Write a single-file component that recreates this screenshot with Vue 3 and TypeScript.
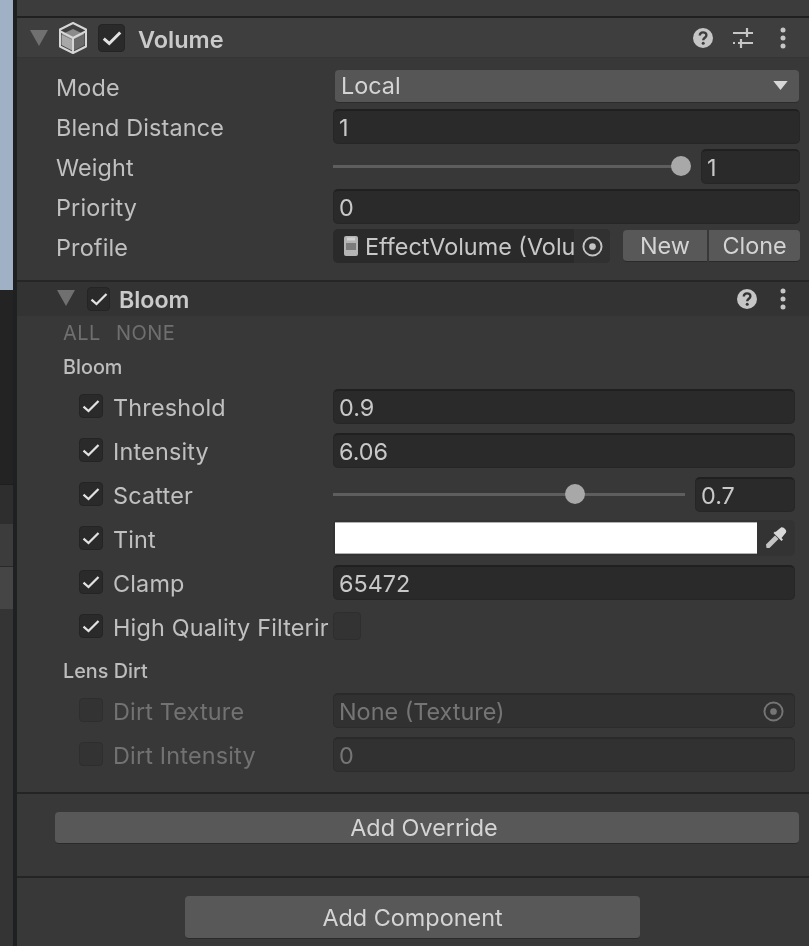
<script setup lang="ts">
interface BloomRow {
  label: string
  kind: 'field' | 'slider' | 'color' | 'toggle'
  value?: string
  pct?: number
}

const volumeLabels = { mode: 'Mode', blend: 'Blend Distance', weight: 'Weight', priority: 'Priority', profile: 'Profile' }

const bloomRows: BloomRow[] = [
  { label: 'Threshold', kind: 'field', value: '0.9' },
  { label: 'Intensity', kind: 'field', value: '6.06' },
  { label: 'Scatter', kind: 'slider', value: '0.7', pct: 68.75 },
  { label: 'Tint', kind: 'color' },
  { label: 'Clamp', kind: 'field', value: '65472' },
  { label: 'High Quality Filterir', kind: 'toggle' }
]
</script>

<template>
  <div class="app">
    <aside class="strip">
      <div class="s-blue"></div>
      <div class="s-dark"></div>
      <div class="s-mid"></div>
      <div class="s-light"></div>
      <div class="s-sel"></div>
      <div class="s-rest"></div>
    </aside>
    <main class="panel">
      <div class="top"></div>

      <header class="comp-head">
        <svg class="tri tri-main" viewBox="0 0 18 16"><path d="M0 0h18L9 16z" /></svg>
        <svg class="cube" viewBox="0 0 32 34">
          <path d="M16 8 4.500 13.500 16 19l11.500-5.500z" fill="#8a8a8a" />
          <path d="M4.500 13.500V24L16 30V19z" fill="#a8a8a8" />
          <path d="M27.500 13.500V24L16 30V19z" fill="#6a6a6a" />
          <path d="M16 2 3 8.500v17L16 32l13-6.500v-17z" fill="none" stroke="#d6d6d6" stroke-width="2" stroke-linejoin="round" />
          <path d="M3.500 10.500 16 17l12.500-6.500M16 17v15" fill="none" stroke="#d6d6d6" stroke-width="2" />
        </svg>
        <span class="box box-head">
          <svg viewBox="0 0 16 16"><path d="M2 8.500 6 12 14 4" /></svg>
        </span>
        <span class="title">Volume</span>
        <span class="head-spacer"></span>
        <svg class="ico" viewBox="0 0 22 22">
          <circle cx="11" cy="11" r="10" fill="#c6c6c6" />
          <path d="M7.800 8.600c0-4.200 6.600-4.200 6.600-.4 0 2.500-3.200 2.500-3.200 5" fill="none" stroke="#3e3e3e" stroke-width="2.400" />
          <circle cx="11.200" cy="16.300" r="1.500" fill="#3e3e3e" />
        </svg>
        <svg class="ico ico-sliders" viewBox="0 0 22 22">
          <path d="M1 6h20M6 16h15M1 16h2M15 1v9M9 12v9" fill="none" stroke="#c6c6c6" stroke-width="2.200" />
        </svg>
        <svg class="ico ico-kebab" viewBox="0 0 6 22">
          <circle cx="3" cy="3" r="2.500" /><circle cx="3" cy="11" r="2.500" /><circle cx="3" cy="19" r="2.500" />
        </svg>
      </header>

      <section class="vol-body">
        <div class="vrow">
          <label>{{ volumeLabels.mode }}</label>
          <div class="dropdown">
            <span>Local</span>
            <svg viewBox="0 0 16 10"><path d="M0 0h16L8 10z" /></svg>
          </div>
        </div>
        <div class="vrow">
          <label>{{ volumeLabels.blend }}</label>
          <div class="field">1</div>
        </div>
        <div class="vrow">
          <label>{{ volumeLabels.weight }}</label>
          <div class="slider">
            <div class="track"><i class="thumb" :style="{ left: '97.4%' }"></i></div>
            <div class="field num num-vol">1</div>
          </div>
        </div>
        <div class="vrow">
          <label>{{ volumeLabels.priority }}</label>
          <div class="field">0</div>
        </div>
        <div class="vrow">
          <label>{{ volumeLabels.profile }}</label>
          <div class="profile">
            <div class="objfield">
              <svg class="doc" viewBox="0 0 16 22">
                <rect x="1" y="1" width="14" height="20" rx="2" fill="#b4b4b4" />
                <rect x="3" y="8" width="10" height="7" fill="#7c7c7c" />
                <rect x="4" y="2.500" width="8" height="3" fill="#d0d0d0" />
              </svg>
              <span class="objtext">EffectVolume (Volu</span>
              <span class="picker">
                <svg viewBox="0 0 22 22"><circle cx="11" cy="11" r="9.500" fill="none" stroke="#c4c4c4" stroke-width="2" /><circle cx="11" cy="11" r="3.500" fill="#c4c4c4" /></svg>
              </span>
            </div>
            <div class="btns">
              <button class="btn new">New</button>
              <button class="btn clone">Clone</button>
            </div>
          </div>
        </div>
      </section>

      <header class="bloom-head">
        <svg class="tri tri-bloom" viewBox="0 0 18 16"><path d="M0 0h18L9 16z" /></svg>
        <span class="box box-bloom">
          <svg viewBox="0 0 16 16"><path d="M2 8.500 6 12 14 4" /></svg>
        </span>
        <span class="title title-bloom">Bloom</span>
        <span class="head-spacer"></span>
        <svg class="ico" viewBox="0 0 22 22">
          <circle cx="11" cy="11" r="10" fill="#c6c6c6" />
          <path d="M7.800 8.600c0-4.200 6.600-4.200 6.600-.4 0 2.500-3.200 2.500-3.200 5" fill="none" stroke="#333" stroke-width="2.400" />
          <circle cx="11.200" cy="16.300" r="1.500" fill="#333" />
        </svg>
        <svg class="ico ico-kebab kebab-bloom" viewBox="0 0 6 22">
          <circle cx="3" cy="3" r="2.500" /><circle cx="3" cy="11" r="2.500" /><circle cx="3" cy="19" r="2.500" />
        </svg>
      </header>

      <section class="bloom-body">
        <div class="allnone"><span>ALL</span><span>NONE</span></div>
        <h4>Bloom</h4>
        <div class="rows">
          <div v-for="row in bloomRows" :key="row.label" class="brow">
            <span class="box box-row">
              <svg viewBox="0 0 16 16"><path d="M2 8.500 6 12 14 4" /></svg>
            </span>
            <label class="blabel">{{ row.label }}</label>
            <div v-if="row.kind === 'field'" class="field">{{ row.value }}</div>
            <div v-else-if="row.kind === 'slider'" class="slider slider-bloom">
              <div class="track"><i class="thumb" :style="{ left: row.pct + '%' }"></i></div>
              <div class="field num">{{ row.value }}</div>
            </div>
            <div v-else-if="row.kind === 'color'" class="color">
              <div class="swatch"></div>
              <span class="dropper">
                <svg viewBox="0 0 24 24">
                  <path d="M2.500 22 2 18.500 11 9.500l3.500 3.500-9 9z" fill="#c4c4c4" />
                  <path d="M11.500 6 17 1.500c2-1.500 6.500 3 5 5L17.500 12l1.500 1.500-1.500 1.500-8-8 1.500-1.500z" fill="#d8d8d8" />
                </svg>
              </span>
            </div>
            <span v-else class="box box-toggle"></span>
          </div>
        </div>
        <h4 class="h-dirt">Lens Dirt</h4>
        <div class="rows">
          <div class="brow dim">
            <span class="box box-row"></span>
            <label class="blabel">Dirt Texture</label>
            <div class="field obj-dim">
              <span>None (Texture)</span>
              <svg viewBox="0 0 22 22"><circle cx="11" cy="11" r="9.500" fill="none" stroke="#757575" stroke-width="2" /><circle cx="11" cy="11" r="3.500" fill="#757575" /></svg>
            </div>
          </div>
          <div class="brow dim">
            <span class="box box-row"></span>
            <label class="blabel">Dirt Intensity</label>
            <div class="field">0</div>
          </div>
        </div>
      </section>

      <section class="override">
        <button class="btn wide">Add Override</button>
      </section>

      <section class="add">
        <button class="btn addc">Add Component</button>
      </section>
    </main>
  </div>
</template>

<style>
html, body { margin: 0; background: #383838; overflow: hidden; }
</style>

<style scoped>
.app {
  display: flex;
  width: 813px;
  height: 946px;
  margin-left: -4px;
  overflow: hidden;
  background: #383838;
  color: #c0c0c0;
  font-family: Inter, "Noto Sans", sans-serif;
  font-size: 23.400px;
  filter: blur(0.65px);
}
.strip {
  flex: 0 0 17px;
  display: flex;
  flex-direction: column;
  border-right: 4px solid #1e2022;
}
.s-blue { height: 290px; background: #a0b1c5; }
.s-dark { height: 194px; background: #232323; }
.s-mid { height: 39px; background: #2e2e2e; border-top: 1px solid #1e1e1e; }
.s-light { height: 42px; background: #3c3c3c; border-bottom: 1px solid #2a2a2a; }
.s-sel { height: 42px; background: #454545; }
.s-rest { flex: 1; background: #343434; }

.panel { flex: 1; min-width: 0; display: flex; flex-direction: column; }
.top { height: 16px; background: #3c3c3c; border-bottom: 2px solid #202020; }

.comp-head, .bloom-head { display: flex; align-items: center; }
.comp-head { height: 40px; background: #3e3e3e; padding: 0 23px 0 13px; border-bottom: 1px solid #353535; box-sizing: border-box; }
.bloom-head { height: 34px; background: #333; padding: 0 23px 0 40px; border-top: 2px solid #262626; box-sizing: content-box; }

.tri { fill: #707070; flex: none; }
.tri-main { width: 18px; height: 16px; }
.tri-bloom { width: 18px; height: 16px; margin-top: -2px; }
.cube { width: 32px; height: 34px; margin-left: 9px; flex: none; }

.box { display: flex; align-items: center; justify-content: center; flex: none; box-sizing: border-box; background: #2a2a2a; border: 1px solid #242424; border-radius: 4px; }
.box svg { fill: none; stroke: #e2e2e2; stroke-width: 1.800; }
.box-head { width: 27px; height: 28px; margin-left: 9px; }
.box-head svg { width: 22px; height: 22px; stroke-width: 2.200; }
.box-bloom { width: 23px; height: 24px; margin-left: 12px; }
.box-bloom svg { width: 20px; height: 20px; }
.box-row { width: 24px; height: 24px; }
.box-row svg { width: 20px; height: 20px; }
.box-toggle { width: 28px; height: 28px; background: #333; border-color: #2e2e2e; }

.title { margin-left: 13px; padding-top: 3px; font-weight: 600; color: #cacaca; font-size: 23.500px; }
.title-bloom { margin-left: 9px; padding-top: 1px; font-size: 23.200px; }
.head-spacer { flex: 1; }

.ico { width: 22px; height: 22px; flex: none; }
.ico-sliders { margin-left: 18px; }
.ico-kebab { width: 6px; fill: #c6c6c6; margin-left: 26px; }
.kebab-bloom { margin-left: 22px; }

.vol-body { padding: 10px 9px 16px 39px; display: flex; flex-direction: column; gap: 4px; }
.vrow { display: grid; grid-template-columns: 277px 1fr; height: 36px; align-items: center; }
.vrow label { padding-top: 2px; letter-spacing: 0.150px; }

.field {
  display: flex;
  align-items: center;
  height: 35px;
  min-width: 0;
  box-sizing: border-box;
  padding: 2px 5px 0;
  flex: 1;
  background: #2a2a2a;
  border: 1px solid #262626;
  border-top: 2px solid #202020;
  border-radius: 5px;
  color: #c8c8c8;
}

.dropdown {
  display: flex;
  align-items: center;
  justify-content: space-between;
  height: 32px;
  margin: 0 1px 0 2px;
  padding: 0 10px 0 6px;
  background: #565656;
  border-bottom: 1px solid #2c2c2c;
  border-radius: 4px;
  color: #d4d4d4;
}
.dropdown svg { width: 15px; height: 9px; fill: #d8d8d8; margin-right: 1px; }

.slider { display: flex; align-items: center; gap: 11px; }
.slider-bloom { flex: 1; gap: 10px; min-width: 0; }
.track { position: relative; flex: 1; height: 3px; background: #5e5e5e; }
.thumb { position: absolute; top: 50%; width: 20px; height: 20px; margin: -10px 0 0 -10px; border-radius: 50%; background: #a8a8a8; }
.num { flex: 0 0 100px; }
.num-vol { flex-basis: 99px; }

.profile { display: flex; align-items: center; min-width: 0; }
.objfield {
  position: relative;
  display: flex;
  align-items: center;
  width: 277px;
  height: 34px;
  box-sizing: border-box;
  padding-left: 10px;
  background: #2a2a2a;
  border-radius: 5px;
  overflow: hidden;
  color: #c8c8c8;
}
.doc { width: 16px; height: 22px; flex: none; }
.objtext { margin-left: 6px; white-space: nowrap; flex: none; }
.picker { position: absolute; top: 0; right: 0; bottom: 0; width: 36px; display: flex; align-items: center; justify-content: center; background: #313131; }
.picker svg { width: 21px; height: 21px; }

.btns { display: flex; margin-left: 13px; gap: 2px; flex: 1; }
.btn {
  font: inherit;
  color: #d4d4d4;
  background: #585858;
  border: 0;
  border-bottom: 1px solid #2a2a2a;
  border-radius: 4px;
  padding: 0;
  height: 32px;
}
.new { width: 84px; border-radius: 4px 0 0 4px; }
.clone { flex: 1; border-radius: 0 4px 4px 0; }

.bloom-body { padding: 0 14px 20px 46px; }
.allnone { height: 34px; display: flex; gap: 15px; align-items: center; font-size: 20px; color: #6f6f6f; letter-spacing: 0.500px; }
h4 { margin: 0 0 4px; height: 34px; line-height: 34px; font-size: 19.800px; font-weight: 500; color: #bdbdbd; }
.h-dirt { margin-top: 10px; }

.rows { display: flex; flex-direction: column; gap: 8px; margin-left: 16px; }
.brow { display: flex; align-items: center; height: 36px; }
.blabel { flex: 0 0 216px; margin-left: 10px; margin-right: 4px; white-space: nowrap; overflow: hidden; padding-top: 2px; letter-spacing: 0.180px; }

.color { flex: 1; display: flex; align-items: center; min-width: 0; height: 36px; background: #333; border-radius: 5px; overflow: hidden; }
.swatch { margin-left: 2px; flex: 1; height: 32px; background: #fff; box-shadow: 0 1px 0 #b0b0b0 inset, 0 -1px 0 #b0b0b0 inset; }
.dropper { flex: 0 0 38px; display: flex; align-items: center; justify-content: center; }
.dropper svg { width: 24px; height: 24px; }

.dim .blabel { color: #727272; }
.dim .box-row { background: #333; border-color: #2e2e2e; }
.dim .field { background: #313131; border: 1px solid #2c2c2c; border-top: 2px solid #2a2a2a; color: #757575; }
.obj-dim { justify-content: space-between; padding-right: 10px; }
.obj-dim svg { width: 21px; height: 21px; flex: none; }

.override { box-sizing: border-box; padding: 18px 10px 0 38px; border-top: 2px solid #242424; border-bottom: 2px solid #242424; height: 86px; }
.wide { display: block; width: 100%; padding-right: 6px; }
.add { flex: 1; display: flex; justify-content: flex-start; padding: 18px 0 0 168px; }
.addc { width: 455px; height: 43px; padding-top: 1px; }
</style>
